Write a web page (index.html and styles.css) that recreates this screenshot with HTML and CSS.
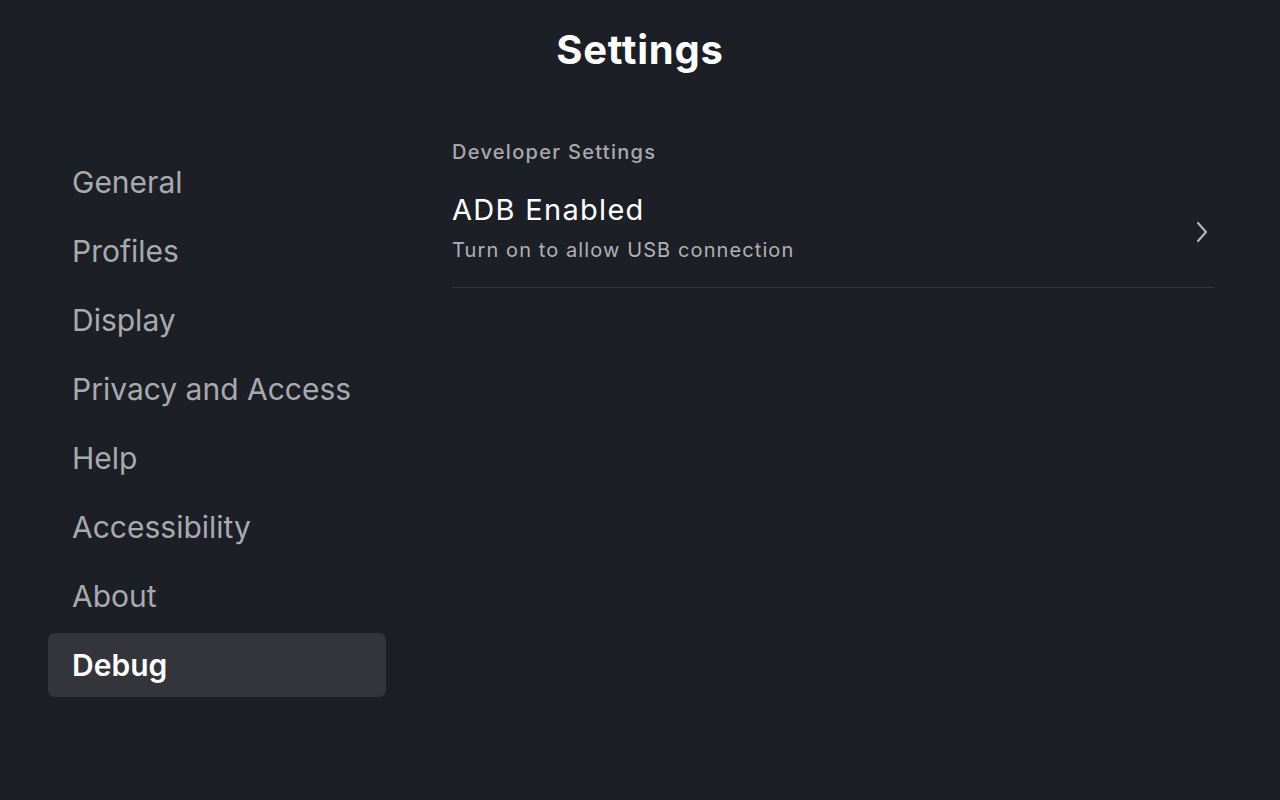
FILE: index.html
```html
<!DOCTYPE html>
<html lang="en">
<head>
<meta charset="utf-8">
<title>Settings</title>
<link rel="stylesheet" href="styles.css">
</head>
<body>
<header class="header">
  <h1 class="title">Settings</h1>
</header>
<main class="main">
  <nav class="sidebar">
    <div class="nav-item">General</div>
    <div class="nav-item">Profiles</div>
    <div class="nav-item">Display</div>
    <div class="nav-item">Privacy and Access</div>
    <div class="nav-item">Help</div>
    <div class="nav-item">Accessibility</div>
    <div class="nav-item">About</div>
    <div class="nav-item active">Debug</div>
  </nav>
  <section class="content">
    <div class="section-label">Developer Settings</div>
    <div class="row">
      <div class="row-text">
        <div class="row-title">ADB Enabled</div>
        <div class="row-sub">Turn on to allow USB connection</div>
      </div>
      <svg class="chevron" width="14" height="22" viewBox="0 0 14 22" aria-hidden="true">
        <path d="M3 2 L11 11 L3 20" fill="none" stroke="#b3b4b8" stroke-width="2.2" stroke-linecap="round" stroke-linejoin="round"/>
      </svg>
    </div>
  </section>
</main>
</body>
</html>
```
FILE: styles.css
```css
* { box-sizing: border-box; }
html, body { margin: 0; padding: 0; }
body {
  width: 1280px;
  height: 800px;
  background: #1d1f26;
  font-family: Inter, "Noto Sans", sans-serif;
  color: #ffffff;
  overflow: hidden;
}
.header {
  height: 120px;
  padding-top: 26px;
  text-align: center;
}
.title {
  margin: 0;
  font-size: 40px;
  line-height: 48px;
  font-weight: 700;
  letter-spacing: 0.75px;
}
.main {
  display: flex;
  gap: 66px;
  padding-left: 48px;
}
.sidebar {
  width: 338px;
  padding-top: 30px;
  display: flex;
  flex-direction: column;
  gap: 5px;
}
.nav-item {
  height: 64px;
  display: flex;
  align-items: center;
  padding-left: 24px;
  font-size: 30px;
  color: #a9aaae;
  border-radius: 7px;
}
.nav-item.active {
  background: #33353a;
  color: #ffffff;
  font-weight: 600;
}
.content {
  width: 762px;
  padding-top: 20px;
}
.section-label {
  font-size: 20px;
  line-height: 24px;
  font-weight: 500;
  letter-spacing: 1.3px;
  color: #a8a9ad;
}
.row {
  margin-top: 28px;
  padding-bottom: 23px;
  border-bottom: 1px solid #35373d;
  display: flex;
  align-items: center;
}
.row-text { flex: 1; }
.row-title {
  font-size: 29px;
  line-height: 36px;
  letter-spacing: 1.3px;
  color: #ffffff;
}
.row-sub {
  margin-top: 8px;
  font-size: 20px;
  line-height: 28px;
  letter-spacing: 1.1px;
  color: #b0b1b5;
}
.chevron {
  margin-right: 5px;
  margin-top: 8px;
}
```
